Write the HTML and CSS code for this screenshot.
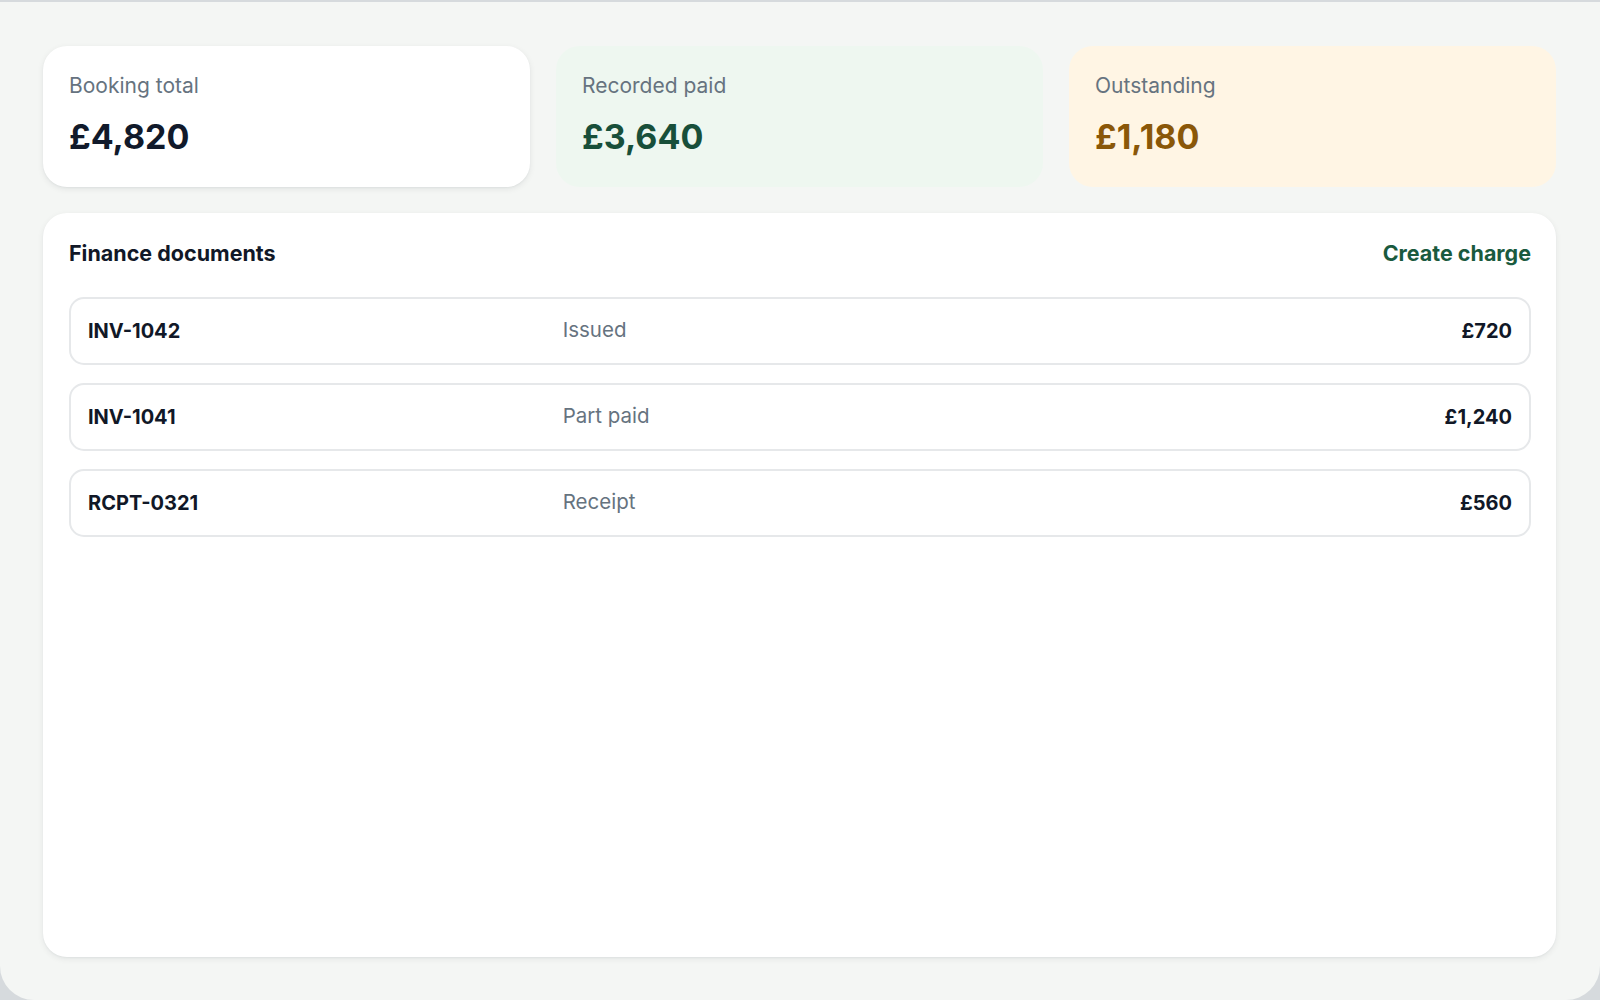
FILE: index.html
```html
<!DOCTYPE html>
<html lang="en">
<head>
<meta charset="utf-8">
<title>Finance</title>
<link rel="stylesheet" href="styles.css">
</head>
<body>
<div class="app">
  <div class="stats">
    <div class="stat stat-total">
      <div class="stat-label">Booking total</div>
      <div class="stat-value">£4,820</div>
    </div>
    <div class="stat stat-paid">
      <div class="stat-label">Recorded paid</div>
      <div class="stat-value">£3,640</div>
    </div>
    <div class="stat stat-due">
      <div class="stat-label">Outstanding</div>
      <div class="stat-value">£1,180</div>
    </div>
  </div>
  <div class="panel">
    <div class="panel-head">
      <div class="panel-title">Finance documents</div>
      <a class="panel-action" href="#">Create charge</a>
    </div>
    <div class="rows">
      <div class="row">
        <div class="doc-id">INV-1042</div>
        <div class="doc-status">Issued</div>
        <div class="doc-amount">£720</div>
      </div>
      <div class="row">
        <div class="doc-id">INV-1041</div>
        <div class="doc-status">Part paid</div>
        <div class="doc-amount">£1,240</div>
      </div>
      <div class="row">
        <div class="doc-id">RCPT-0321</div>
        <div class="doc-status">Receipt</div>
        <div class="doc-amount">£560</div>
      </div>
    </div>
  </div>
</div>
</body>
</html>
```
FILE: styles.css
```css
* { box-sizing: border-box; }
html, body { height: 100%; }
body {
  margin: 0;
  background: #d6dadd;
  font-family: Inter, "Noto Sans", sans-serif;
  color: #111827;
}
.app {
  margin-top: 2px;
  height: calc(100% - 2px);
  background: #f4f6f4;
  border-radius: 0 0 34px 34px;
  padding: 44px 44px 43px 43px;
  display: flex;
  flex-direction: column;
  gap: 26px;
}
.stats {
  display: grid;
  grid-template-columns: repeat(3, 1fr);
  gap: 26px;
}
.stat {
  height: 141px;
  border-radius: 24px;
  padding: 26px 26px;
}
.stat-total {
  background: #ffffff;
  box-shadow: 0 2px 6px rgba(15, 23, 42, 0.08), 0 1px 2px rgba(15, 23, 42, 0.04);
}
.stat-paid { background: #eef7f0; }
.stat-due { background: #fff5e4; }
.stat-label {
  font-size: 21px;
  line-height: 28px;
  color: #66737f;
}
.stat-value {
  margin-top: 17px;
  font-size: 34px;
  line-height: 40px;
  font-weight: 700;
  color: #111a2b;
}
.stat-paid .stat-value { color: #184f3a; }
.stat-due .stat-value { color: #8a5708; }
.panel {
  flex: 1;
  background: #ffffff;
  border-radius: 24px;
  padding: 26px 25px 26px 26px;
  box-shadow: 0 2px 6px rgba(15, 23, 42, 0.07), 0 1px 2px rgba(15, 23, 42, 0.04);
}
.panel-head {
  display: flex;
  justify-content: space-between;
  align-items: center;
  height: 28px;
  margin-bottom: 30px;
}
.panel-title {
  font-size: 21.5px;
  font-weight: 700;
  color: #111827;
}
.panel-action {
  font-size: 21.5px;
  font-weight: 700;
  color: #1a5a3e;
  text-decoration: none;
}
.rows {
  display: flex;
  flex-direction: column;
  gap: 18px;
}
.row {
  display: grid;
  grid-template-columns: repeat(3, 1fr);
  align-items: center;
  height: 68px;
  padding: 0 17px;
  border: 2px solid #e6e8ea;
  border-radius: 15px;
  font-size: 20px;
  line-height: 28px;
}
.doc-id { font-weight: 700; color: #111827; }
.doc-status { color: #66737f; font-size: 20.5px; margin-top: -2px; }
.doc-amount { font-weight: 700; text-align: right; color: #111827; }
```
